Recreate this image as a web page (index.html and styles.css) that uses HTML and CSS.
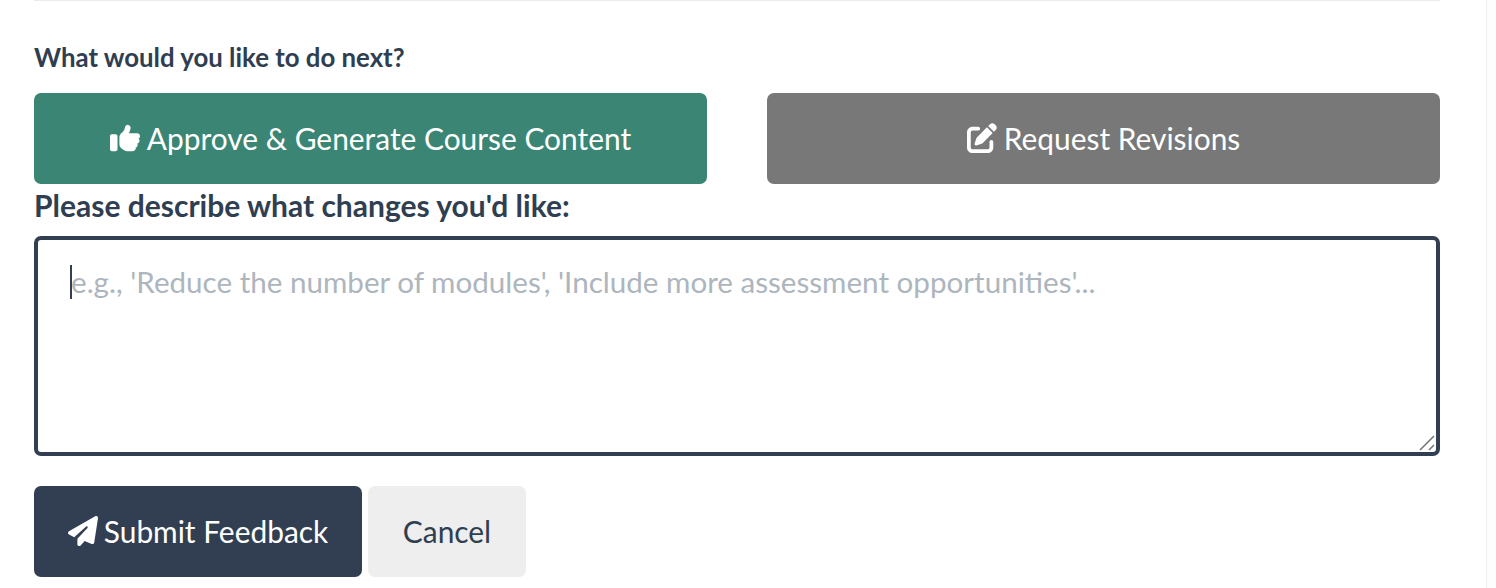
FILE: index.html
```html
<!DOCTYPE html>
<html>
	<head>
		<title>Course Outline Review</title>
		<link rel="stylesheet" href="styles.css">
	</head>

	<body>
		<div class="page">
			<hr class="divider">

			<p class="question">What would you like to do next?</p>

			<div class="choices">
				<button class="btn btn-approve" type="button">
					<svg class="icon" viewBox="0 0 512 512"><path d="M313.4 32.9c26 5.2 42.9 30.5 37.7 56.5l-2.3 11.4c-5.3 26.7-15.1 52.1-28.8 75.2H464c26.5 0 48 21.5 48 48c0 18.5-10.5 34.6-25.9 42.6C497 275.4 504 288.9 504 304c0 23.4-16.8 42.9-38.9 47.1c4.4 7.3 6.9 15.8 6.9 24.9c0 21.3-13.9 39.4-33.1 45.6c.7 3.3 1.1 6.8 1.1 10.4c0 26.5-21.5 48-48 48H294.5c-19 0-37.5-5.6-53.3-16.1l-38.5-25.7C176 420.4 160 390.4 160 358.3V320 272 247.1c0-29.2 13.3-56.7 36-75l7.4-5.9c26.5-21.2 44.6-51 51.2-84.2l2.3-11.4c5.2-26 30.5-42.9 56.5-37.7zM32 192H96c17.7 0 32 14.3 32 32V448c0 17.7-14.3 32-32 32H32c-17.7 0-32-14.3-32-32V224c0-17.7 14.3-32 32-32z"/></svg>
					Approve &amp; Generate Course Content
				</button>
				<button class="btn btn-revise" type="button">
					<svg class="icon" viewBox="0 0 512 512"><path d="M471.6 21.7c-21.9-21.9-57.3-21.9-79.2 0L362.3 51.7l97.9 97.9 30.1-30.1c21.9-21.9 21.9-57.3 0-79.2L471.6 21.7zm-299.2 220c-6.1 6.1-10.8 13.6-13.5 21.9l-29.6 88.8c-2.9 8.6-.6 18.1 5.8 24.6s15.9 8.7 24.6 5.8l88.8-29.6c8.2-2.7 15.7-7.4 21.9-13.5L437.7 172.3 339.7 74.3 172.4 241.7zM96 64C43 64 0 107 0 160V416c0 53 43 96 96 96H352c53 0 96-43 96-96V320c0-17.7-14.3-32-32-32s-32 14.3-32 32v96c0 17.7-14.3 32-32 32H96c-17.7 0-32-14.3-32-32V160c0-17.7 14.3-32 32-32h96c17.7 0 32-14.3 32-32s-14.3-32-32-32H96z"/></svg>
					Request Revisions
				</button>
			</div>

			<label class="feedback-label" for="feedback">Please describe what changes you'd like:</label>
			<div class="feedback-box">
				<textarea class="feedback" id="feedback" placeholder="e.g., 'Reduce the number of modules', 'Include more assessment opportunities'..."></textarea>
				<span class="caret"></span>
				<svg class="grip" viewBox="0 0 16 16"><path d="M1 15L15 1M10 15L15 10"/></svg>
			</div>

			<div class="actions">
				<button class="btn btn-submit" type="button">
					<svg class="icon" viewBox="0 0 512 512"><path d="M498.1 5.6c10.1 7 15.4 19.1 13.5 31.2l-64 416c-1.5 9.7-7.4 18.2-16 23s-18.9 5.4-28 1.6L284 427.7l-68.5 74.1c-8.9 9.7-22.9 12.9-35.2 8.1S160 493.2 160 480V396.4c0-4 1.5-7.8 4.2-10.7L331.8 202.8c5.8-6.3 5.6-16-.4-22s-15.7-6.4-22-.7L106 360.8 17.7 316.6C7.1 311.3 .3 300.7 0 288.9s5.9-22.8 16.1-28.7l448-256c10.7-6.1 23.9-5.5 34 1.4z"/></svg>
					Submit Feedback
				</button>
				<button class="btn btn-cancel" type="button">Cancel</button>
			</div>
		</div>
		<div class="scroll-track"></div>
	</body>
</html>
```

FILE: styles.css
```css
html, body {
	height: 100%;
}

body {
	margin: 0;
	display: flex;
	overflow: hidden;
	background-color: white;
	font-family: Lato, "Open Sans", sans-serif;
	color: #2f3e50;
}

.page {
	width: 1406px;
	padding-left: 34px;
	flex-shrink: 0;
}

.divider {
	margin: 0;
	border: 0;
	border-top: 1px solid #e9ecef;
}

.question {
	margin: 42px 0 0 0;
	height: 29px;
	line-height: 28px;
	font-size: 25.8px;
	font-weight: 700;
}

.choices {
	display: flex;
	gap: 60px;
	margin-top: 21px;
}

.btn {
	display: inline-flex;
	align-items: center;
	justify-content: center;
	gap: 7px;
	box-sizing: border-box;
	height: 91px;
	padding: 0 0 2px 0;
	border: 0;
	border-radius: 7px;
	font-family: inherit;
	font-size: 29.9px;
	color: white;
}

.btn-approve {
	width: 673px;
	background-color: #3b8574;
}

.btn-revise {
	width: 673px;
	background-color: #777877;
}

.btn-submit {
	width: 328px;
	gap: 6px;
	background-color: #323f52;
}

.btn-cancel {
	width: 158px;
	background-color: #eeeeee;
	color: #2f3e50;
}

.icon {
	width: 30px;
	height: 30px;
	fill: white;
	flex-shrink: 0;
}

.feedback-label {
	display: block;
	height: 42px;
	line-height: 42px;
	font-size: 30px;
	font-weight: 700;
}

.feedback-box {
	position: relative;
	margin-top: 10px;
}

.feedback {
	display: block;
	box-sizing: border-box;
	width: 1406px;
	height: 220px;
	padding: 23px 33px;
	border: 4px solid #323f52;
	border-radius: 7px;
	outline: none;
	resize: none;
	font-family: inherit;
	font-size: 29.6px;
	line-height: 38px;
	color: #2f3e50;
}

.feedback::placeholder {
	color: #adb5bd;
	opacity: 1;
}

.caret {
	position: absolute;
	left: 36px;
	top: 29px;
	width: 2px;
	height: 34px;
	background-color: #323f52;
}

.grip {
	position: absolute;
	right: 5px;
	bottom: 5px;
	width: 16px;
	height: 16px;
	fill: none;
	stroke: #777777;
	stroke-width: 1.6;
}

.actions {
	display: flex;
	gap: 6px;
	margin-top: 30px;
}

.scroll-track {
	width: 9px;
	margin-left: 46px;
	border-left: 1px solid #eeeeee;
	background-color: #fdfdfd;
}
```
